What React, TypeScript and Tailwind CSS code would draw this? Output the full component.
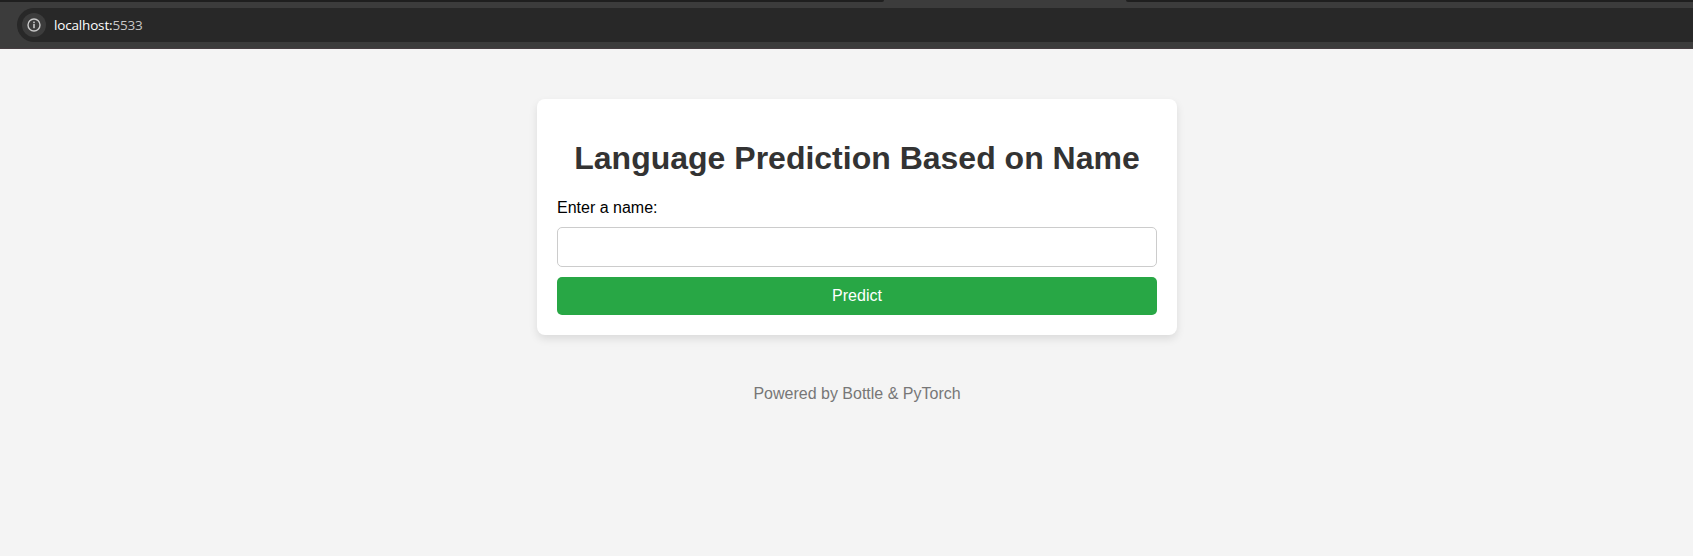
function InfoIcon() {
  return (
    <svg width="14" height="14" viewBox="0 0 14 14" fill="none" aria-hidden="true">
      <circle cx="7" cy="7" r="6" stroke="#c9c9c9" strokeWidth="1.4" />
      <rect x="6.2" y="6" width="1.6" height="4.2" fill="#c9c9c9" />
      <rect x="6.2" y="3.6" width="1.6" height="1.6" fill="#c9c9c9" />
    </svg>
  );
}

function BrowserBar() {
  return (
    <header className="flex h-[49px] flex-col border-b border-[#463d41] bg-[#3c3c3c]">
      <div className="flex h-0.5 justify-between">
        <div className="w-[884px] rounded-br-[2px] bg-[#1f1f1f]" />
        <div className="w-[567px] rounded-bl-[2px] bg-[#1f1f1f]" />
      </div>
      <div className="mt-1.5 ml-[17px] flex h-[34px] items-center rounded-l-full bg-[#282828] pl-[5px]">
        <div className="flex size-6 items-center justify-center rounded-full bg-[#3c3c3c]">
          <InfoIcon />
        </div>
        <div className="ml-2 font-['Open_Sans','Noto_Sans',sans-serif] text-[13.5px] leading-5 tracking-[-0.17px] text-white">
          localhost:<span className="text-[#c7c7c7]">5533</span>
        </div>
      </div>
    </header>
  );
}

export default function App() {
  return (
    <div className="flex h-[556px] flex-col overflow-hidden bg-[#f4f4f4] font-['Liberation_Sans',Arial,sans-serif] text-base leading-[18px] text-black">
      <BrowserBar />
      <main className="flex flex-col items-center pt-[50px] pl-[21px]">
        <form
          className="flex w-[640px] flex-col rounded-lg bg-white p-5 shadow-[0_4px_8px_rgba(0,0,0,0.1)]"
          onSubmit={(e) => e.preventDefault()}
        >
          <h1 className="mt-[21px] mb-[22px] text-center text-[32px] leading-[37px] font-bold text-[#333]">
            Language Prediction Based on Name
          </h1>
          <label htmlFor="name">Enter a name:</label>
          <input
            id="name"
            type="text"
            className="my-2.5 h-10 w-full rounded-[5px] border border-[#ccc] bg-white px-2.5 outline-none"
          />
          <button type="submit" className="h-[38px] w-full rounded-[5px] bg-[#28a745] text-white">
            Predict
          </button>
        </form>
        <footer className="mt-[50px] text-[#777]">Powered by Bottle &amp; PyTorch</footer>
      </main>
    </div>
  );
}
